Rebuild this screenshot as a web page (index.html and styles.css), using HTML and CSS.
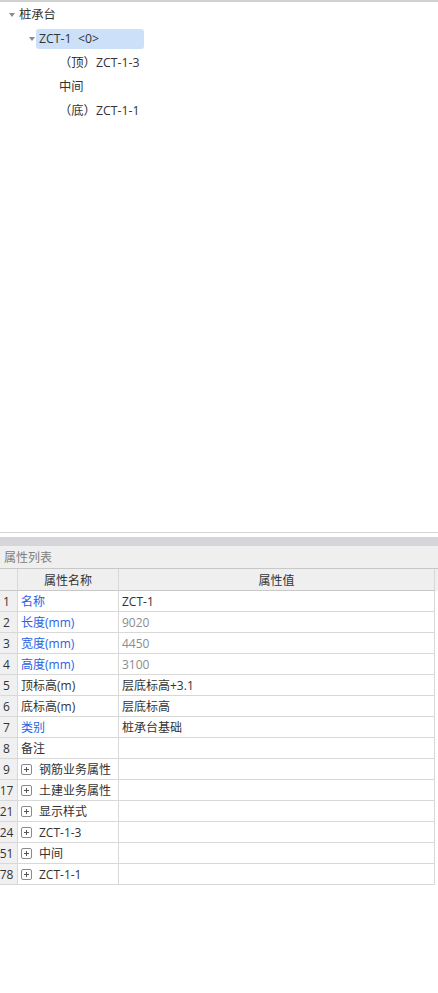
FILE: index.html
```html
<!DOCTYPE html>
<html>
<head>
<meta charset="utf-8">
<link rel="stylesheet" href="styles.css">
</head>
<body>
<div class="tree">
  <div class="node lv0"><span class="arrow"></span><span class="label">桩承台</span></div>
  <div class="node lv1"><span class="arrow"></span><span class="label sel">ZCT-1&nbsp; &lt;0&gt;</span></div>
  <div class="node lv2"><span class="label">（顶）ZCT-1-3</span></div>
  <div class="node lv2"><span class="label">中间</span></div>
  <div class="node lv2"><span class="label">（底）ZCT-1-1</span></div>
</div>
<div class="sep"></div>
<div class="band"></div>
<div class="title">属性列表</div>
<div class="grid">
  <div class="row head"><div class="c num"></div><div class="c name">属性名称</div><div class="c val">属性值</div></div>
  <div class="row"><div class="c num">1</div><div class="c name blue">名称</div><div class="c val">ZCT-1</div></div>
  <div class="row"><div class="c num">2</div><div class="c name blue">长度(mm)</div><div class="c val grey">9020</div></div>
  <div class="row"><div class="c num">3</div><div class="c name blue">宽度(mm)</div><div class="c val grey">4450</div></div>
  <div class="row"><div class="c num">4</div><div class="c name blue">高度(mm)</div><div class="c val grey">3100</div></div>
  <div class="row"><div class="c num">5</div><div class="c name">顶标高(m)</div><div class="c val">层底标高+3.1</div></div>
  <div class="row"><div class="c num">6</div><div class="c name">底标高(m)</div><div class="c val">层底标高</div></div>
  <div class="row"><div class="c num">7</div><div class="c name blue">类别</div><div class="c val">桩承台基础</div></div>
  <div class="row"><div class="c num">8</div><div class="c name">备注</div><div class="c val"></div></div>
  <div class="row"><div class="c num">9</div><div class="c name"><span class="plus"></span>钢筋业务属性</div><div class="c val"></div></div>
  <div class="row"><div class="c num">17</div><div class="c name"><span class="plus"></span>土建业务属性</div><div class="c val"></div></div>
  <div class="row"><div class="c num">21</div><div class="c name"><span class="plus"></span>显示样式</div><div class="c val"></div></div>
  <div class="row"><div class="c num">24</div><div class="c name"><span class="plus"></span>ZCT-1-3</div><div class="c val"></div></div>
  <div class="row"><div class="c num">51</div><div class="c name"><span class="plus"></span>中间</div><div class="c val"></div></div>
  <div class="row"><div class="c num">78</div><div class="c name"><span class="plus"></span>ZCT-1-1</div><div class="c val"></div></div>
</div>
</body>
</html>
```
FILE: styles.css
```css
html, body {
  margin: 0;
  padding: 0;
  background: #ffffff;
}
body {
  width: 438px;
  font-family: "Open Sans", "Noto Sans CJK SC", sans-serif;
  font-size: 12px;
  color: #333333;
}
.tree {
  height: 529px;
  padding-top: 1px;
  border-top: 2px solid #d0d0d0;
  box-sizing: content-box;
}
.node {
  height: 24px;
  display: flex;
  align-items: center;
  position: relative;
  font-size: 12.3px;
}
.lv0 { padding-left: 19px; }
.lv1 { padding-left: 36px; }
.lv2 { padding-left: 59px; }
.arrow {
  position: absolute;
  top: 10px;
  width: 0;
  height: 0;
  border-left: 3px solid transparent;
  border-right: 3px solid transparent;
  border-top: 4px solid #8a8a8a;
}
.lv0 .arrow { left: 9px; }
.lv1 .arrow { left: 29px; }
.label {
  line-height: 20px;
  white-space: pre;
}
.sel {
  background: #cce1f9;
  border-radius: 3px;
  padding: 0 45px 0 3px;
  margin-top: -1px;
}
.sep {
  height: 4px;
  border-top: 1px solid #d4d4d4;
}
.band {
  height: 9px;
  background: #d5d6db;
}
.title {
  height: 22px;
  line-height: 23px;
  background: #efefef;
  color: #808080;
  padding-left: 4px;
  border-bottom: 1px solid #c8c8c8;
}
.row {
  display: grid;
  grid-template-columns: 18px 101px 316px;
  height: 21px;
}
.c {
  border-right: 1px solid #d8d8d8;
  border-bottom: 1px solid #d8d8d8;
  line-height: 20px;
  white-space: nowrap;
  overflow: hidden;
  display: flex;
  align-items: center;
  padding-top: 1px;
  box-sizing: border-box;
}
.num {
  background: #f0f0f0;
  justify-content: center;
  padding-right: 4px;
  color: #333;
}
.name { padding-left: 3px; }
.val { padding-left: 3px; }
.head {
  background: #efefef;
  height: 22px;
}
.head .c {
  border-bottom-color: #c8c8c8;
  justify-content: center;
  line-height: 21px;
  padding: 1px 0 0 0;
}
.blue { color: #2a62e4; }
.grey { color: #8c8c8c; }
.plus {
  width: 9px;
  height: 9px;
  border: 1px solid #8a8a8a;
  border-radius: 2px;
  margin-right: 7px;
  position: relative;
  flex: none;
}
.plus::before {
  content: "";
  position: absolute;
  left: 2px;
  top: 4px;
  width: 5px;
  height: 1px;
  background: #555;
}
.plus::after {
  content: "";
  position: absolute;
  left: 4px;
  top: 2px;
  width: 1px;
  height: 5px;
  background: #555;
}
```
